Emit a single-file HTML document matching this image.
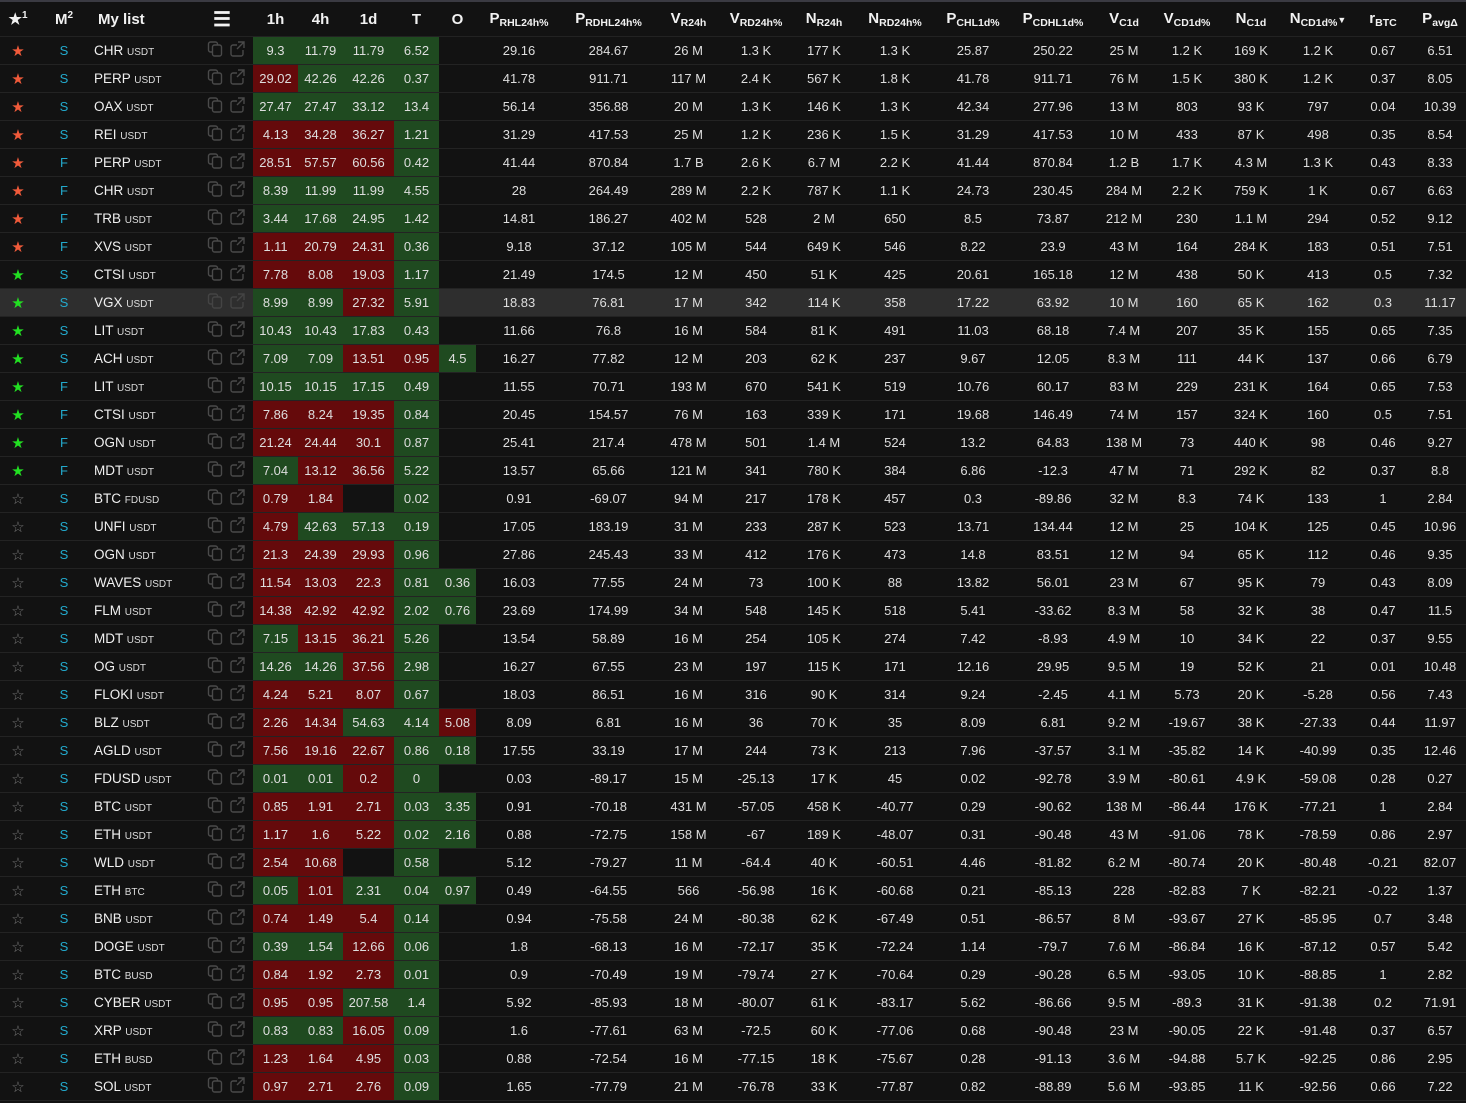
<!DOCTYPE html>
<html style="height:1103px;overflow:hidden"><head><meta charset="utf-8"><style>
body{margin:0;background:#121212;width:1466px;height:1103px;overflow:hidden;font-family:"Liberation Sans",sans-serif;}
table{border-collapse:collapse;table-layout:fixed;width:1466px;border-top:2px solid #3a3a42}
td,th{padding:0;text-align:center;white-space:nowrap;overflow:hidden}
th{height:34px;color:#f2f2f2;font-size:15px;font-weight:bold;border-bottom:1px solid #222}
th sub{font-size:10.5px;vertical-align:-3px}
td{height:27px;border-bottom:1px solid #232323;color:#dedede;font-size:13px}
.s{font-size:15px}.o{color:#f05a3a}.gs{color:#22e022}.w{color:#777}
.m{color:#23a9cc;font-size:13px}
.n{text-align:left;padding-left:2px;color:#f0f0f0;font-size:13.5px}
.n small{font-size:10px;color:#ddd}
.i{text-align:left;vertical-align:top}
.i svg{display:block;margin:4px 0 0 2px}
.g{background:#1f4a20}.r{background:#650a0b}
tr.h td{background:#2e2e2e}tr.h td.g{background:#1f4a20}tr.h td.r{background:#650a0b}
</style></head><body>
<table>
<colgroup><col style="width:36px"><col style="width:56px"><col style="width:113px"><col style="width:48px"><col style="width:45px"><col style="width:45px"><col style="width:51px"><col style="width:45px"><col style="width:37px"><col style="width:86px"><col style="width:93px"><col style="width:67px"><col style="width:68px"><col style="width:68px"><col style="width:74px"><col style="width:82px"><col style="width:78px"><col style="width:64px"><col style="width:62px"><col style="width:66px"><col style="width:68px"><col style="width:62px"><col style="width:52px"></colgroup>
<tr><th>★<sup style="font-size:10px">1</sup></th><th>M<sup style="font-size:10px">2</sup></th><th style="text-align:left;padding-left:6px">My list</th><th style="text-align:left;padding-left:8px;font-size:20px">☰</th><th>1h</th><th>4h</th><th>1d</th><th>T</th><th>O</th><th>P<sub>RHL24h%</sub></th><th>P<sub>RDHL24h%</sub></th><th>V<sub>R24h</sub></th><th>V<sub>RD24h%</sub></th><th>N<sub>R24h</sub></th><th>N<sub>RD24h%</sub></th><th>P<sub>CHL1d%</sub></th><th>P<sub>CDHL1d%</sub></th><th>V<sub>C1d</sub></th><th>V<sub>CD1d%</sub></th><th>N<sub>C1d</sub></th><th>N<sub>CD1d%</sub><span style="font-size:9px">▼</span></th><th>r<sub>BTC</sub></th><th>P<sub>avgΔ</sub></th></tr>
<tr><td class="s o">★</td><td class="m">S</td><td class="n">CHR <small>USDT</small></td><td class="i"><svg width="42" height="16" fill="none" stroke="#4a4a4a" stroke-width="1.4"><rect x="1.5" y="1" width="9" height="10" rx="2"/><rect x="5.5" y="4" width="9" height="11" rx="2" fill="#121212"/><path d="M30 4h-4a2 2 0 0 0-2 2v7a2 2 0 0 0 2 2h8a2 2 0 0 0 2-2v-4M31 1h6v6M37 1l-7 7"/></svg></td><td class="g">9.3</td><td class="g">11.79</td><td class="g">11.79</td><td class="g">6.52</td><td></td><td>29.16</td><td>284.67</td><td>26 M</td><td>1.3 K</td><td>177 K</td><td>1.3 K</td><td>25.87</td><td>250.22</td><td>25 M</td><td>1.2 K</td><td>169 K</td><td>1.2 K</td><td>0.67</td><td>6.51</td></tr>
<tr><td class="s o">★</td><td class="m">S</td><td class="n">PERP <small>USDT</small></td><td class="i"><svg width="42" height="16" fill="none" stroke="#4a4a4a" stroke-width="1.4"><rect x="1.5" y="1" width="9" height="10" rx="2"/><rect x="5.5" y="4" width="9" height="11" rx="2" fill="#121212"/><path d="M30 4h-4a2 2 0 0 0-2 2v7a2 2 0 0 0 2 2h8a2 2 0 0 0 2-2v-4M31 1h6v6M37 1l-7 7"/></svg></td><td class="r">29.02</td><td class="g">42.26</td><td class="g">42.26</td><td class="g">0.37</td><td></td><td>41.78</td><td>911.71</td><td>117 M</td><td>2.4 K</td><td>567 K</td><td>1.8 K</td><td>41.78</td><td>911.71</td><td>76 M</td><td>1.5 K</td><td>380 K</td><td>1.2 K</td><td>0.37</td><td>8.05</td></tr>
<tr><td class="s o">★</td><td class="m">S</td><td class="n">OAX <small>USDT</small></td><td class="i"><svg width="42" height="16" fill="none" stroke="#4a4a4a" stroke-width="1.4"><rect x="1.5" y="1" width="9" height="10" rx="2"/><rect x="5.5" y="4" width="9" height="11" rx="2" fill="#121212"/><path d="M30 4h-4a2 2 0 0 0-2 2v7a2 2 0 0 0 2 2h8a2 2 0 0 0 2-2v-4M31 1h6v6M37 1l-7 7"/></svg></td><td class="g">27.47</td><td class="g">27.47</td><td class="g">33.12</td><td class="g">13.4</td><td></td><td>56.14</td><td>356.88</td><td>20 M</td><td>1.3 K</td><td>146 K</td><td>1.3 K</td><td>42.34</td><td>277.96</td><td>13 M</td><td>803</td><td>93 K</td><td>797</td><td>0.04</td><td>10.39</td></tr>
<tr><td class="s o">★</td><td class="m">S</td><td class="n">REI <small>USDT</small></td><td class="i"><svg width="42" height="16" fill="none" stroke="#4a4a4a" stroke-width="1.4"><rect x="1.5" y="1" width="9" height="10" rx="2"/><rect x="5.5" y="4" width="9" height="11" rx="2" fill="#121212"/><path d="M30 4h-4a2 2 0 0 0-2 2v7a2 2 0 0 0 2 2h8a2 2 0 0 0 2-2v-4M31 1h6v6M37 1l-7 7"/></svg></td><td class="r">4.13</td><td class="r">34.28</td><td class="r">36.27</td><td class="g">1.21</td><td></td><td>31.29</td><td>417.53</td><td>25 M</td><td>1.2 K</td><td>236 K</td><td>1.5 K</td><td>31.29</td><td>417.53</td><td>10 M</td><td>433</td><td>87 K</td><td>498</td><td>0.35</td><td>8.54</td></tr>
<tr><td class="s o">★</td><td class="m">F</td><td class="n">PERP <small>USDT</small></td><td class="i"><svg width="42" height="16" fill="none" stroke="#4a4a4a" stroke-width="1.4"><rect x="1.5" y="1" width="9" height="10" rx="2"/><rect x="5.5" y="4" width="9" height="11" rx="2" fill="#121212"/><path d="M30 4h-4a2 2 0 0 0-2 2v7a2 2 0 0 0 2 2h8a2 2 0 0 0 2-2v-4M31 1h6v6M37 1l-7 7"/></svg></td><td class="r">28.51</td><td class="r">57.57</td><td class="r">60.56</td><td class="g">0.42</td><td></td><td>41.44</td><td>870.84</td><td>1.7 B</td><td>2.6 K</td><td>6.7 M</td><td>2.2 K</td><td>41.44</td><td>870.84</td><td>1.2 B</td><td>1.7 K</td><td>4.3 M</td><td>1.3 K</td><td>0.43</td><td>8.33</td></tr>
<tr><td class="s o">★</td><td class="m">F</td><td class="n">CHR <small>USDT</small></td><td class="i"><svg width="42" height="16" fill="none" stroke="#4a4a4a" stroke-width="1.4"><rect x="1.5" y="1" width="9" height="10" rx="2"/><rect x="5.5" y="4" width="9" height="11" rx="2" fill="#121212"/><path d="M30 4h-4a2 2 0 0 0-2 2v7a2 2 0 0 0 2 2h8a2 2 0 0 0 2-2v-4M31 1h6v6M37 1l-7 7"/></svg></td><td class="g">8.39</td><td class="g">11.99</td><td class="g">11.99</td><td class="g">4.55</td><td></td><td>28</td><td>264.49</td><td>289 M</td><td>2.2 K</td><td>787 K</td><td>1.1 K</td><td>24.73</td><td>230.45</td><td>284 M</td><td>2.2 K</td><td>759 K</td><td>1 K</td><td>0.67</td><td>6.63</td></tr>
<tr><td class="s o">★</td><td class="m">F</td><td class="n">TRB <small>USDT</small></td><td class="i"><svg width="42" height="16" fill="none" stroke="#4a4a4a" stroke-width="1.4"><rect x="1.5" y="1" width="9" height="10" rx="2"/><rect x="5.5" y="4" width="9" height="11" rx="2" fill="#121212"/><path d="M30 4h-4a2 2 0 0 0-2 2v7a2 2 0 0 0 2 2h8a2 2 0 0 0 2-2v-4M31 1h6v6M37 1l-7 7"/></svg></td><td class="g">3.44</td><td class="g">17.68</td><td class="g">24.95</td><td class="g">1.42</td><td></td><td>14.81</td><td>186.27</td><td>402 M</td><td>528</td><td>2 M</td><td>650</td><td>8.5</td><td>73.87</td><td>212 M</td><td>230</td><td>1.1 M</td><td>294</td><td>0.52</td><td>9.12</td></tr>
<tr><td class="s o">★</td><td class="m">F</td><td class="n">XVS <small>USDT</small></td><td class="i"><svg width="42" height="16" fill="none" stroke="#4a4a4a" stroke-width="1.4"><rect x="1.5" y="1" width="9" height="10" rx="2"/><rect x="5.5" y="4" width="9" height="11" rx="2" fill="#121212"/><path d="M30 4h-4a2 2 0 0 0-2 2v7a2 2 0 0 0 2 2h8a2 2 0 0 0 2-2v-4M31 1h6v6M37 1l-7 7"/></svg></td><td class="r">1.11</td><td class="r">20.79</td><td class="r">24.31</td><td class="g">0.36</td><td></td><td>9.18</td><td>37.12</td><td>105 M</td><td>544</td><td>649 K</td><td>546</td><td>8.22</td><td>23.9</td><td>43 M</td><td>164</td><td>284 K</td><td>183</td><td>0.51</td><td>7.51</td></tr>
<tr><td class="s gs">★</td><td class="m">S</td><td class="n">CTSI <small>USDT</small></td><td class="i"><svg width="42" height="16" fill="none" stroke="#4a4a4a" stroke-width="1.4"><rect x="1.5" y="1" width="9" height="10" rx="2"/><rect x="5.5" y="4" width="9" height="11" rx="2" fill="#121212"/><path d="M30 4h-4a2 2 0 0 0-2 2v7a2 2 0 0 0 2 2h8a2 2 0 0 0 2-2v-4M31 1h6v6M37 1l-7 7"/></svg></td><td class="r">7.78</td><td class="r">8.08</td><td class="r">19.03</td><td class="g">1.17</td><td></td><td>21.49</td><td>174.5</td><td>12 M</td><td>450</td><td>51 K</td><td>425</td><td>20.61</td><td>165.18</td><td>12 M</td><td>438</td><td>50 K</td><td>413</td><td>0.5</td><td>7.32</td></tr>
<tr class="h"><td class="s gs">★</td><td class="m">S</td><td class="n">VGX <small>USDT</small></td><td class="i"><svg width="42" height="16" fill="none" stroke="#444" stroke-width="1.4"><rect x="1.5" y="1" width="9" height="10" rx="2"/><rect x="5.5" y="4" width="9" height="11" rx="2" fill="#2e2e2e"/><path d="M30 4h-4a2 2 0 0 0-2 2v7a2 2 0 0 0 2 2h8a2 2 0 0 0 2-2v-4M31 1h6v6M37 1l-7 7"/></svg></td><td class="g">8.99</td><td class="g">8.99</td><td class="r">27.32</td><td class="g">5.91</td><td></td><td>18.83</td><td>76.81</td><td>17 M</td><td>342</td><td>114 K</td><td>358</td><td>17.22</td><td>63.92</td><td>10 M</td><td>160</td><td>65 K</td><td>162</td><td>0.3</td><td>11.17</td></tr>
<tr><td class="s gs">★</td><td class="m">S</td><td class="n">LIT <small>USDT</small></td><td class="i"><svg width="42" height="16" fill="none" stroke="#4a4a4a" stroke-width="1.4"><rect x="1.5" y="1" width="9" height="10" rx="2"/><rect x="5.5" y="4" width="9" height="11" rx="2" fill="#121212"/><path d="M30 4h-4a2 2 0 0 0-2 2v7a2 2 0 0 0 2 2h8a2 2 0 0 0 2-2v-4M31 1h6v6M37 1l-7 7"/></svg></td><td class="g">10.43</td><td class="g">10.43</td><td class="g">17.83</td><td class="g">0.43</td><td></td><td>11.66</td><td>76.8</td><td>16 M</td><td>584</td><td>81 K</td><td>491</td><td>11.03</td><td>68.18</td><td>7.4 M</td><td>207</td><td>35 K</td><td>155</td><td>0.65</td><td>7.35</td></tr>
<tr><td class="s gs">★</td><td class="m">S</td><td class="n">ACH <small>USDT</small></td><td class="i"><svg width="42" height="16" fill="none" stroke="#4a4a4a" stroke-width="1.4"><rect x="1.5" y="1" width="9" height="10" rx="2"/><rect x="5.5" y="4" width="9" height="11" rx="2" fill="#121212"/><path d="M30 4h-4a2 2 0 0 0-2 2v7a2 2 0 0 0 2 2h8a2 2 0 0 0 2-2v-4M31 1h6v6M37 1l-7 7"/></svg></td><td class="g">7.09</td><td class="g">7.09</td><td class="r">13.51</td><td class="r">0.95</td><td class="g">4.5</td><td>16.27</td><td>77.82</td><td>12 M</td><td>203</td><td>62 K</td><td>237</td><td>9.67</td><td>12.05</td><td>8.3 M</td><td>111</td><td>44 K</td><td>137</td><td>0.66</td><td>6.79</td></tr>
<tr><td class="s gs">★</td><td class="m">F</td><td class="n">LIT <small>USDT</small></td><td class="i"><svg width="42" height="16" fill="none" stroke="#4a4a4a" stroke-width="1.4"><rect x="1.5" y="1" width="9" height="10" rx="2"/><rect x="5.5" y="4" width="9" height="11" rx="2" fill="#121212"/><path d="M30 4h-4a2 2 0 0 0-2 2v7a2 2 0 0 0 2 2h8a2 2 0 0 0 2-2v-4M31 1h6v6M37 1l-7 7"/></svg></td><td class="g">10.15</td><td class="g">10.15</td><td class="g">17.15</td><td class="g">0.49</td><td></td><td>11.55</td><td>70.71</td><td>193 M</td><td>670</td><td>541 K</td><td>519</td><td>10.76</td><td>60.17</td><td>83 M</td><td>229</td><td>231 K</td><td>164</td><td>0.65</td><td>7.53</td></tr>
<tr><td class="s gs">★</td><td class="m">F</td><td class="n">CTSI <small>USDT</small></td><td class="i"><svg width="42" height="16" fill="none" stroke="#4a4a4a" stroke-width="1.4"><rect x="1.5" y="1" width="9" height="10" rx="2"/><rect x="5.5" y="4" width="9" height="11" rx="2" fill="#121212"/><path d="M30 4h-4a2 2 0 0 0-2 2v7a2 2 0 0 0 2 2h8a2 2 0 0 0 2-2v-4M31 1h6v6M37 1l-7 7"/></svg></td><td class="r">7.86</td><td class="r">8.24</td><td class="r">19.35</td><td class="g">0.84</td><td></td><td>20.45</td><td>154.57</td><td>76 M</td><td>163</td><td>339 K</td><td>171</td><td>19.68</td><td>146.49</td><td>74 M</td><td>157</td><td>324 K</td><td>160</td><td>0.5</td><td>7.51</td></tr>
<tr><td class="s gs">★</td><td class="m">F</td><td class="n">OGN <small>USDT</small></td><td class="i"><svg width="42" height="16" fill="none" stroke="#4a4a4a" stroke-width="1.4"><rect x="1.5" y="1" width="9" height="10" rx="2"/><rect x="5.5" y="4" width="9" height="11" rx="2" fill="#121212"/><path d="M30 4h-4a2 2 0 0 0-2 2v7a2 2 0 0 0 2 2h8a2 2 0 0 0 2-2v-4M31 1h6v6M37 1l-7 7"/></svg></td><td class="r">21.24</td><td class="r">24.44</td><td class="r">30.1</td><td class="g">0.87</td><td></td><td>25.41</td><td>217.4</td><td>478 M</td><td>501</td><td>1.4 M</td><td>524</td><td>13.2</td><td>64.83</td><td>138 M</td><td>73</td><td>440 K</td><td>98</td><td>0.46</td><td>9.27</td></tr>
<tr><td class="s gs">★</td><td class="m">F</td><td class="n">MDT <small>USDT</small></td><td class="i"><svg width="42" height="16" fill="none" stroke="#4a4a4a" stroke-width="1.4"><rect x="1.5" y="1" width="9" height="10" rx="2"/><rect x="5.5" y="4" width="9" height="11" rx="2" fill="#121212"/><path d="M30 4h-4a2 2 0 0 0-2 2v7a2 2 0 0 0 2 2h8a2 2 0 0 0 2-2v-4M31 1h6v6M37 1l-7 7"/></svg></td><td class="g">7.04</td><td class="r">13.12</td><td class="r">36.56</td><td class="g">5.22</td><td></td><td>13.57</td><td>65.66</td><td>121 M</td><td>341</td><td>780 K</td><td>384</td><td>6.86</td><td>-12.3</td><td>47 M</td><td>71</td><td>292 K</td><td>82</td><td>0.37</td><td>8.8</td></tr>
<tr><td class="s w">☆</td><td class="m">S</td><td class="n">BTC <small>FDUSD</small></td><td class="i"><svg width="42" height="16" fill="none" stroke="#4a4a4a" stroke-width="1.4"><rect x="1.5" y="1" width="9" height="10" rx="2"/><rect x="5.5" y="4" width="9" height="11" rx="2" fill="#121212"/><path d="M30 4h-4a2 2 0 0 0-2 2v7a2 2 0 0 0 2 2h8a2 2 0 0 0 2-2v-4M31 1h6v6M37 1l-7 7"/></svg></td><td class="r">0.79</td><td class="r">1.84</td><td></td><td class="g">0.02</td><td></td><td>0.91</td><td>-69.07</td><td>94 M</td><td>217</td><td>178 K</td><td>457</td><td>0.3</td><td>-89.86</td><td>32 M</td><td>8.3</td><td>74 K</td><td>133</td><td>1</td><td>2.84</td></tr>
<tr><td class="s w">☆</td><td class="m">S</td><td class="n">UNFI <small>USDT</small></td><td class="i"><svg width="42" height="16" fill="none" stroke="#4a4a4a" stroke-width="1.4"><rect x="1.5" y="1" width="9" height="10" rx="2"/><rect x="5.5" y="4" width="9" height="11" rx="2" fill="#121212"/><path d="M30 4h-4a2 2 0 0 0-2 2v7a2 2 0 0 0 2 2h8a2 2 0 0 0 2-2v-4M31 1h6v6M37 1l-7 7"/></svg></td><td class="r">4.79</td><td class="g">42.63</td><td class="g">57.13</td><td class="g">0.19</td><td></td><td>17.05</td><td>183.19</td><td>31 M</td><td>233</td><td>287 K</td><td>523</td><td>13.71</td><td>134.44</td><td>12 M</td><td>25</td><td>104 K</td><td>125</td><td>0.45</td><td>10.96</td></tr>
<tr><td class="s w">☆</td><td class="m">S</td><td class="n">OGN <small>USDT</small></td><td class="i"><svg width="42" height="16" fill="none" stroke="#4a4a4a" stroke-width="1.4"><rect x="1.5" y="1" width="9" height="10" rx="2"/><rect x="5.5" y="4" width="9" height="11" rx="2" fill="#121212"/><path d="M30 4h-4a2 2 0 0 0-2 2v7a2 2 0 0 0 2 2h8a2 2 0 0 0 2-2v-4M31 1h6v6M37 1l-7 7"/></svg></td><td class="r">21.3</td><td class="r">24.39</td><td class="r">29.93</td><td class="g">0.96</td><td></td><td>27.86</td><td>245.43</td><td>33 M</td><td>412</td><td>176 K</td><td>473</td><td>14.8</td><td>83.51</td><td>12 M</td><td>94</td><td>65 K</td><td>112</td><td>0.46</td><td>9.35</td></tr>
<tr><td class="s w">☆</td><td class="m">S</td><td class="n">WAVES <small>USDT</small></td><td class="i"><svg width="42" height="16" fill="none" stroke="#4a4a4a" stroke-width="1.4"><rect x="1.5" y="1" width="9" height="10" rx="2"/><rect x="5.5" y="4" width="9" height="11" rx="2" fill="#121212"/><path d="M30 4h-4a2 2 0 0 0-2 2v7a2 2 0 0 0 2 2h8a2 2 0 0 0 2-2v-4M31 1h6v6M37 1l-7 7"/></svg></td><td class="r">11.54</td><td class="r">13.03</td><td class="r">22.3</td><td class="g">0.81</td><td class="g">0.36</td><td>16.03</td><td>77.55</td><td>24 M</td><td>73</td><td>100 K</td><td>88</td><td>13.82</td><td>56.01</td><td>23 M</td><td>67</td><td>95 K</td><td>79</td><td>0.43</td><td>8.09</td></tr>
<tr><td class="s w">☆</td><td class="m">S</td><td class="n">FLM <small>USDT</small></td><td class="i"><svg width="42" height="16" fill="none" stroke="#4a4a4a" stroke-width="1.4"><rect x="1.5" y="1" width="9" height="10" rx="2"/><rect x="5.5" y="4" width="9" height="11" rx="2" fill="#121212"/><path d="M30 4h-4a2 2 0 0 0-2 2v7a2 2 0 0 0 2 2h8a2 2 0 0 0 2-2v-4M31 1h6v6M37 1l-7 7"/></svg></td><td class="r">14.38</td><td class="r">42.92</td><td class="r">42.92</td><td class="g">2.02</td><td class="g">0.76</td><td>23.69</td><td>174.99</td><td>34 M</td><td>548</td><td>145 K</td><td>518</td><td>5.41</td><td>-33.62</td><td>8.3 M</td><td>58</td><td>32 K</td><td>38</td><td>0.47</td><td>11.5</td></tr>
<tr><td class="s w">☆</td><td class="m">S</td><td class="n">MDT <small>USDT</small></td><td class="i"><svg width="42" height="16" fill="none" stroke="#4a4a4a" stroke-width="1.4"><rect x="1.5" y="1" width="9" height="10" rx="2"/><rect x="5.5" y="4" width="9" height="11" rx="2" fill="#121212"/><path d="M30 4h-4a2 2 0 0 0-2 2v7a2 2 0 0 0 2 2h8a2 2 0 0 0 2-2v-4M31 1h6v6M37 1l-7 7"/></svg></td><td class="g">7.15</td><td class="r">13.15</td><td class="r">36.21</td><td class="g">5.26</td><td></td><td>13.54</td><td>58.89</td><td>16 M</td><td>254</td><td>105 K</td><td>274</td><td>7.42</td><td>-8.93</td><td>4.9 M</td><td>10</td><td>34 K</td><td>22</td><td>0.37</td><td>9.55</td></tr>
<tr><td class="s w">☆</td><td class="m">S</td><td class="n">OG <small>USDT</small></td><td class="i"><svg width="42" height="16" fill="none" stroke="#4a4a4a" stroke-width="1.4"><rect x="1.5" y="1" width="9" height="10" rx="2"/><rect x="5.5" y="4" width="9" height="11" rx="2" fill="#121212"/><path d="M30 4h-4a2 2 0 0 0-2 2v7a2 2 0 0 0 2 2h8a2 2 0 0 0 2-2v-4M31 1h6v6M37 1l-7 7"/></svg></td><td class="g">14.26</td><td class="g">14.26</td><td class="r">37.56</td><td class="g">2.98</td><td></td><td>16.27</td><td>67.55</td><td>23 M</td><td>197</td><td>115 K</td><td>171</td><td>12.16</td><td>29.95</td><td>9.5 M</td><td>19</td><td>52 K</td><td>21</td><td>0.01</td><td>10.48</td></tr>
<tr><td class="s w">☆</td><td class="m">S</td><td class="n">FLOKI <small>USDT</small></td><td class="i"><svg width="42" height="16" fill="none" stroke="#4a4a4a" stroke-width="1.4"><rect x="1.5" y="1" width="9" height="10" rx="2"/><rect x="5.5" y="4" width="9" height="11" rx="2" fill="#121212"/><path d="M30 4h-4a2 2 0 0 0-2 2v7a2 2 0 0 0 2 2h8a2 2 0 0 0 2-2v-4M31 1h6v6M37 1l-7 7"/></svg></td><td class="r">4.24</td><td class="r">5.21</td><td class="r">8.07</td><td class="g">0.67</td><td></td><td>18.03</td><td>86.51</td><td>16 M</td><td>316</td><td>90 K</td><td>314</td><td>9.24</td><td>-2.45</td><td>4.1 M</td><td>5.73</td><td>20 K</td><td>-5.28</td><td>0.56</td><td>7.43</td></tr>
<tr><td class="s w">☆</td><td class="m">S</td><td class="n">BLZ <small>USDT</small></td><td class="i"><svg width="42" height="16" fill="none" stroke="#4a4a4a" stroke-width="1.4"><rect x="1.5" y="1" width="9" height="10" rx="2"/><rect x="5.5" y="4" width="9" height="11" rx="2" fill="#121212"/><path d="M30 4h-4a2 2 0 0 0-2 2v7a2 2 0 0 0 2 2h8a2 2 0 0 0 2-2v-4M31 1h6v6M37 1l-7 7"/></svg></td><td class="r">2.26</td><td class="r">14.34</td><td class="g">54.63</td><td class="g">4.14</td><td class="r">5.08</td><td>8.09</td><td>6.81</td><td>16 M</td><td>36</td><td>70 K</td><td>35</td><td>8.09</td><td>6.81</td><td>9.2 M</td><td>-19.67</td><td>38 K</td><td>-27.33</td><td>0.44</td><td>11.97</td></tr>
<tr><td class="s w">☆</td><td class="m">S</td><td class="n">AGLD <small>USDT</small></td><td class="i"><svg width="42" height="16" fill="none" stroke="#4a4a4a" stroke-width="1.4"><rect x="1.5" y="1" width="9" height="10" rx="2"/><rect x="5.5" y="4" width="9" height="11" rx="2" fill="#121212"/><path d="M30 4h-4a2 2 0 0 0-2 2v7a2 2 0 0 0 2 2h8a2 2 0 0 0 2-2v-4M31 1h6v6M37 1l-7 7"/></svg></td><td class="r">7.56</td><td class="r">19.16</td><td class="r">22.67</td><td class="g">0.86</td><td class="g">0.18</td><td>17.55</td><td>33.19</td><td>17 M</td><td>244</td><td>73 K</td><td>213</td><td>7.96</td><td>-37.57</td><td>3.1 M</td><td>-35.82</td><td>14 K</td><td>-40.99</td><td>0.35</td><td>12.46</td></tr>
<tr><td class="s w">☆</td><td class="m">S</td><td class="n">FDUSD <small>USDT</small></td><td class="i"><svg width="42" height="16" fill="none" stroke="#4a4a4a" stroke-width="1.4"><rect x="1.5" y="1" width="9" height="10" rx="2"/><rect x="5.5" y="4" width="9" height="11" rx="2" fill="#121212"/><path d="M30 4h-4a2 2 0 0 0-2 2v7a2 2 0 0 0 2 2h8a2 2 0 0 0 2-2v-4M31 1h6v6M37 1l-7 7"/></svg></td><td class="g">0.01</td><td class="g">0.01</td><td class="r">0.2</td><td class="g">0</td><td></td><td>0.03</td><td>-89.17</td><td>15 M</td><td>-25.13</td><td>17 K</td><td>45</td><td>0.02</td><td>-92.78</td><td>3.9 M</td><td>-80.61</td><td>4.9 K</td><td>-59.08</td><td>0.28</td><td>0.27</td></tr>
<tr><td class="s w">☆</td><td class="m">S</td><td class="n">BTC <small>USDT</small></td><td class="i"><svg width="42" height="16" fill="none" stroke="#4a4a4a" stroke-width="1.4"><rect x="1.5" y="1" width="9" height="10" rx="2"/><rect x="5.5" y="4" width="9" height="11" rx="2" fill="#121212"/><path d="M30 4h-4a2 2 0 0 0-2 2v7a2 2 0 0 0 2 2h8a2 2 0 0 0 2-2v-4M31 1h6v6M37 1l-7 7"/></svg></td><td class="r">0.85</td><td class="r">1.91</td><td class="r">2.71</td><td class="g">0.03</td><td class="g">3.35</td><td>0.91</td><td>-70.18</td><td>431 M</td><td>-57.05</td><td>458 K</td><td>-40.77</td><td>0.29</td><td>-90.62</td><td>138 M</td><td>-86.44</td><td>176 K</td><td>-77.21</td><td>1</td><td>2.84</td></tr>
<tr><td class="s w">☆</td><td class="m">S</td><td class="n">ETH <small>USDT</small></td><td class="i"><svg width="42" height="16" fill="none" stroke="#4a4a4a" stroke-width="1.4"><rect x="1.5" y="1" width="9" height="10" rx="2"/><rect x="5.5" y="4" width="9" height="11" rx="2" fill="#121212"/><path d="M30 4h-4a2 2 0 0 0-2 2v7a2 2 0 0 0 2 2h8a2 2 0 0 0 2-2v-4M31 1h6v6M37 1l-7 7"/></svg></td><td class="r">1.17</td><td class="r">1.6</td><td class="r">5.22</td><td class="g">0.02</td><td class="g">2.16</td><td>0.88</td><td>-72.75</td><td>158 M</td><td>-67</td><td>189 K</td><td>-48.07</td><td>0.31</td><td>-90.48</td><td>43 M</td><td>-91.06</td><td>78 K</td><td>-78.59</td><td>0.86</td><td>2.97</td></tr>
<tr><td class="s w">☆</td><td class="m">S</td><td class="n">WLD <small>USDT</small></td><td class="i"><svg width="42" height="16" fill="none" stroke="#4a4a4a" stroke-width="1.4"><rect x="1.5" y="1" width="9" height="10" rx="2"/><rect x="5.5" y="4" width="9" height="11" rx="2" fill="#121212"/><path d="M30 4h-4a2 2 0 0 0-2 2v7a2 2 0 0 0 2 2h8a2 2 0 0 0 2-2v-4M31 1h6v6M37 1l-7 7"/></svg></td><td class="r">2.54</td><td class="r">10.68</td><td></td><td class="g">0.58</td><td></td><td>5.12</td><td>-79.27</td><td>11 M</td><td>-64.4</td><td>40 K</td><td>-60.51</td><td>4.46</td><td>-81.82</td><td>6.2 M</td><td>-80.74</td><td>20 K</td><td>-80.48</td><td>-0.21</td><td>82.07</td></tr>
<tr><td class="s w">☆</td><td class="m">S</td><td class="n">ETH <small>BTC</small></td><td class="i"><svg width="42" height="16" fill="none" stroke="#4a4a4a" stroke-width="1.4"><rect x="1.5" y="1" width="9" height="10" rx="2"/><rect x="5.5" y="4" width="9" height="11" rx="2" fill="#121212"/><path d="M30 4h-4a2 2 0 0 0-2 2v7a2 2 0 0 0 2 2h8a2 2 0 0 0 2-2v-4M31 1h6v6M37 1l-7 7"/></svg></td><td class="g">0.05</td><td class="r">1.01</td><td class="g">2.31</td><td class="g">0.04</td><td class="g">0.97</td><td>0.49</td><td>-64.55</td><td>566</td><td>-56.98</td><td>16 K</td><td>-60.68</td><td>0.21</td><td>-85.13</td><td>228</td><td>-82.83</td><td>7 K</td><td>-82.21</td><td>-0.22</td><td>1.37</td></tr>
<tr><td class="s w">☆</td><td class="m">S</td><td class="n">BNB <small>USDT</small></td><td class="i"><svg width="42" height="16" fill="none" stroke="#4a4a4a" stroke-width="1.4"><rect x="1.5" y="1" width="9" height="10" rx="2"/><rect x="5.5" y="4" width="9" height="11" rx="2" fill="#121212"/><path d="M30 4h-4a2 2 0 0 0-2 2v7a2 2 0 0 0 2 2h8a2 2 0 0 0 2-2v-4M31 1h6v6M37 1l-7 7"/></svg></td><td class="r">0.74</td><td class="r">1.49</td><td class="r">5.4</td><td class="g">0.14</td><td></td><td>0.94</td><td>-75.58</td><td>24 M</td><td>-80.38</td><td>62 K</td><td>-67.49</td><td>0.51</td><td>-86.57</td><td>8 M</td><td>-93.67</td><td>27 K</td><td>-85.95</td><td>0.7</td><td>3.48</td></tr>
<tr><td class="s w">☆</td><td class="m">S</td><td class="n">DOGE <small>USDT</small></td><td class="i"><svg width="42" height="16" fill="none" stroke="#4a4a4a" stroke-width="1.4"><rect x="1.5" y="1" width="9" height="10" rx="2"/><rect x="5.5" y="4" width="9" height="11" rx="2" fill="#121212"/><path d="M30 4h-4a2 2 0 0 0-2 2v7a2 2 0 0 0 2 2h8a2 2 0 0 0 2-2v-4M31 1h6v6M37 1l-7 7"/></svg></td><td class="g">0.39</td><td class="g">1.54</td><td class="r">12.66</td><td class="g">0.06</td><td></td><td>1.8</td><td>-68.13</td><td>16 M</td><td>-72.17</td><td>35 K</td><td>-72.24</td><td>1.14</td><td>-79.7</td><td>7.6 M</td><td>-86.84</td><td>16 K</td><td>-87.12</td><td>0.57</td><td>5.42</td></tr>
<tr><td class="s w">☆</td><td class="m">S</td><td class="n">BTC <small>BUSD</small></td><td class="i"><svg width="42" height="16" fill="none" stroke="#4a4a4a" stroke-width="1.4"><rect x="1.5" y="1" width="9" height="10" rx="2"/><rect x="5.5" y="4" width="9" height="11" rx="2" fill="#121212"/><path d="M30 4h-4a2 2 0 0 0-2 2v7a2 2 0 0 0 2 2h8a2 2 0 0 0 2-2v-4M31 1h6v6M37 1l-7 7"/></svg></td><td class="r">0.84</td><td class="r">1.92</td><td class="r">2.73</td><td class="g">0.01</td><td></td><td>0.9</td><td>-70.49</td><td>19 M</td><td>-79.74</td><td>27 K</td><td>-70.64</td><td>0.29</td><td>-90.28</td><td>6.5 M</td><td>-93.05</td><td>10 K</td><td>-88.85</td><td>1</td><td>2.82</td></tr>
<tr><td class="s w">☆</td><td class="m">S</td><td class="n">CYBER <small>USDT</small></td><td class="i"><svg width="42" height="16" fill="none" stroke="#4a4a4a" stroke-width="1.4"><rect x="1.5" y="1" width="9" height="10" rx="2"/><rect x="5.5" y="4" width="9" height="11" rx="2" fill="#121212"/><path d="M30 4h-4a2 2 0 0 0-2 2v7a2 2 0 0 0 2 2h8a2 2 0 0 0 2-2v-4M31 1h6v6M37 1l-7 7"/></svg></td><td class="r">0.95</td><td class="r">0.95</td><td class="g">207.58</td><td class="g">1.4</td><td></td><td>5.92</td><td>-85.93</td><td>18 M</td><td>-80.07</td><td>61 K</td><td>-83.17</td><td>5.62</td><td>-86.66</td><td>9.5 M</td><td>-89.3</td><td>31 K</td><td>-91.38</td><td>0.2</td><td>71.91</td></tr>
<tr><td class="s w">☆</td><td class="m">S</td><td class="n">XRP <small>USDT</small></td><td class="i"><svg width="42" height="16" fill="none" stroke="#4a4a4a" stroke-width="1.4"><rect x="1.5" y="1" width="9" height="10" rx="2"/><rect x="5.5" y="4" width="9" height="11" rx="2" fill="#121212"/><path d="M30 4h-4a2 2 0 0 0-2 2v7a2 2 0 0 0 2 2h8a2 2 0 0 0 2-2v-4M31 1h6v6M37 1l-7 7"/></svg></td><td class="g">0.83</td><td class="g">0.83</td><td class="r">16.05</td><td class="g">0.09</td><td></td><td>1.6</td><td>-77.61</td><td>63 M</td><td>-72.5</td><td>60 K</td><td>-77.06</td><td>0.68</td><td>-90.48</td><td>23 M</td><td>-90.05</td><td>22 K</td><td>-91.48</td><td>0.37</td><td>6.57</td></tr>
<tr><td class="s w">☆</td><td class="m">S</td><td class="n">ETH <small>BUSD</small></td><td class="i"><svg width="42" height="16" fill="none" stroke="#4a4a4a" stroke-width="1.4"><rect x="1.5" y="1" width="9" height="10" rx="2"/><rect x="5.5" y="4" width="9" height="11" rx="2" fill="#121212"/><path d="M30 4h-4a2 2 0 0 0-2 2v7a2 2 0 0 0 2 2h8a2 2 0 0 0 2-2v-4M31 1h6v6M37 1l-7 7"/></svg></td><td class="r">1.23</td><td class="r">1.64</td><td class="r">4.95</td><td class="g">0.03</td><td></td><td>0.88</td><td>-72.54</td><td>16 M</td><td>-77.15</td><td>18 K</td><td>-75.67</td><td>0.28</td><td>-91.13</td><td>3.6 M</td><td>-94.88</td><td>5.7 K</td><td>-92.25</td><td>0.86</td><td>2.95</td></tr>
<tr><td class="s w">☆</td><td class="m">S</td><td class="n">SOL <small>USDT</small></td><td class="i"><svg width="42" height="16" fill="none" stroke="#4a4a4a" stroke-width="1.4"><rect x="1.5" y="1" width="9" height="10" rx="2"/><rect x="5.5" y="4" width="9" height="11" rx="2" fill="#121212"/><path d="M30 4h-4a2 2 0 0 0-2 2v7a2 2 0 0 0 2 2h8a2 2 0 0 0 2-2v-4M31 1h6v6M37 1l-7 7"/></svg></td><td class="r">0.97</td><td class="r">2.71</td><td class="r">2.76</td><td class="g">0.09</td><td></td><td>1.65</td><td>-77.79</td><td>21 M</td><td>-76.78</td><td>33 K</td><td>-77.87</td><td>0.82</td><td>-88.89</td><td>5.6 M</td><td>-93.85</td><td>11 K</td><td>-92.56</td><td>0.66</td><td>7.22</td></tr>
</table>
</body></html>
